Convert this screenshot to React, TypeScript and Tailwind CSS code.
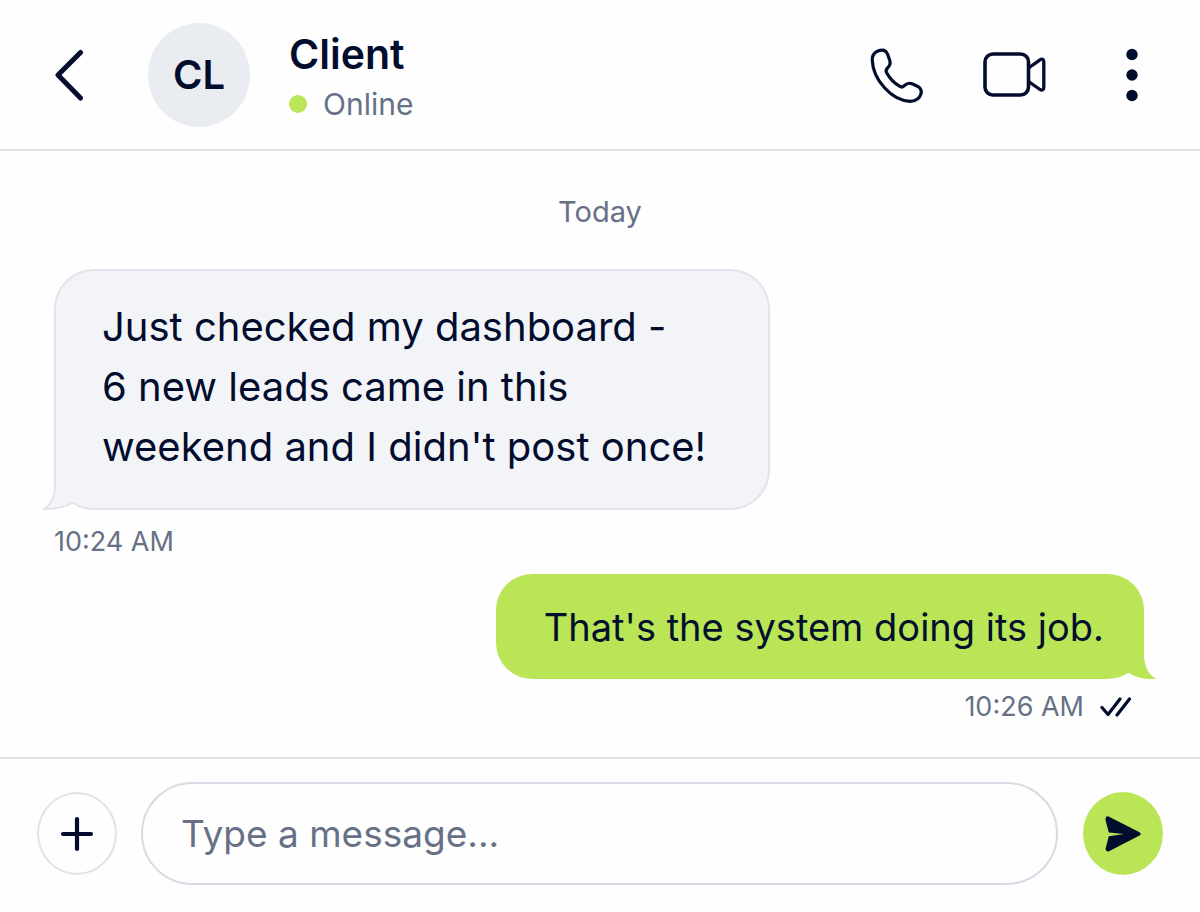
import { useState } from "react";

interface Message {
  id: number;
  lines: string[];
  time: string;
  own: boolean;
}

const messages: Message[] = [
  {
    id: 1,
    lines: [
      "Just checked my dashboard -",
      "6 new leads came in this",
      "weekend and I didn't post once!",
    ],
    time: "10:24 AM",
    own: false,
  },
  {
    id: 2,
    lines: ["That's the system doing its job."],
    time: "10:26 AM",
    own: true,
  },
];

function ChevronIcon() {
  return (
    <svg width="30" height="52" viewBox="0 0 30 52" fill="none" aria-hidden="true">
      <path
        d="M26.500 3.500 4 26 26.500 49"
        stroke="currentColor"
        strokeWidth="5"
        strokeLinecap="round"
        strokeLinejoin="round"
      />
    </svg>
  );
}

function PhoneIcon() {
  return (
    <svg width="54" height="56" viewBox="0 0 54 56" fill="none" aria-hidden="true">
      <path
        d="M8.500 3.800C4 5.500 2 8.500 2.300 13.500C3 32 21 53.500 40 54.300C46 54.300 51 50.500 51.300 45C51.300 42.500 50.500 41 48 39.500L42 36.800C39 35.500 37 36.200 34.500 38.500C33 40.300 31.500 40.500 29.500 39.200C24 36 19.500 31 16.500 25.500C15.700 23.800 16 22.500 17.500 21C20.300 18.500 20.600 16.500 19.800 13.500L17.500 7C16 3.200 12.500 2.200 8.500 3.800Z"
        stroke="currentColor"
        strokeWidth="3.200"
        strokeLinejoin="round"
      />
    </svg>
  );
}

function VideoIcon() {
  return (
    <svg width="64" height="46" viewBox="0 0 64 46" fill="none" aria-hidden="true">
      <rect x="3" y="2" width="43.500" height="41" rx="8" stroke="currentColor" strokeWidth="3.600" />
      <path
        d="M46.500 16 58 7.800C60 6.500 61.800 7.300 61.800 9.500V35.500C61.800 38 60 38.700 58 37.500L46.500 29.500"
        stroke="currentColor"
        strokeWidth="3.300"
        strokeLinejoin="round"
      />
    </svg>
  );
}

function DotsIcon() {
  return (
    <svg width="12" height="54" viewBox="0 0 12 54" fill="currentColor" aria-hidden="true">
      <circle cx="6" cy="6.500" r="5.700" />
      <circle cx="6" cy="27" r="5.700" />
      <circle cx="6" cy="47.500" r="5.700" />
    </svg>
  );
}

function ReadIcon() {
  return (
    <svg width="32" height="22" viewBox="0 0 32 22" fill="none" aria-label="Read">
      <path
        d="M2 11.500 8 18.500 20 3M17 19 29.500 3"
        stroke="currentColor"
        strokeWidth="3.200"
        strokeLinecap="round"
        strokeLinejoin="round"
      />
    </svg>
  );
}

function PlusIcon() {
  return (
    <svg width="34" height="36" viewBox="0 0 34 36" fill="none" aria-hidden="true">
      <path d="M17 3V33M3 18H31" stroke="currentColor" strokeWidth="4.200" strokeLinecap="round" />
    </svg>
  );
}

function SendIcon() {
  return (
    <svg width="36" height="38" viewBox="0 0 36 38" fill="currentColor" aria-hidden="true">
      <path d="M3.500 1.500 34.500 17.200Q37 19 34.500 20.600L3.500 36.500Q.3 37 .6 33.500L3.800 21.300 19 19.100 3.800 17.500.5 5Q.5.500 3.500 1.500Z" />
    </svg>
  );
}

function IncomingTail() {
  return (
    <svg
      className="absolute -bottom-[2px] -left-[14px]"
      width="60"
      height="52"
      viewBox="0 0 60 52"
      aria-hidden="true"
    >
      <path d="M14 8V28C13 40 8 48 2 51C14 51 24 49 31 44L40 40V8Z" fill="#f3f4f8" />
      <path
        d="M13 8V28C13 40 8 48 2 51C14 51 24 49 31 44.500"
        fill="none"
        stroke="#e2e4eb"
        strokeWidth="2"
        strokeLinejoin="round"
      />
    </svg>
  );
}

function OutgoingTail() {
  return (
    <svg
      className="absolute bottom-0 -right-[13px]"
      width="44"
      height="44"
      viewBox="0 0 44 44"
      aria-hidden="true"
    >
      <path d="M31 6V22C32 34 37 41 44 44C33 44.500 23 43 16 38L8 30V6Z" fill="#b9e556" />
    </svg>
  );
}

function ChatMessage({ message }: { message: Message }) {
  const text = message.lines.map((line) => (
    <span key={line} className="block">
      {line}
    </span>
  ));

  if (message.own) {
    return (
      <li className="flex flex-col items-end pr-14">
        <div className="relative rounded-[36px] bg-[#b9e556] pt-[23px] pr-10 pb-[22px] pl-12 text-[38px] leading-[60px] text-[#03102b]">
          {text}
          <OutgoingTail />
        </div>
        <div className="flex h-14 items-center gap-4 pr-3 text-[27px] text-[#677186]">
          <time>{message.time}</time>
          <span className="text-[#020c2d]">
            <ReadIcon />
          </span>
        </div>
      </li>
    );
  }

  return (
    <li className="flex flex-col items-start pl-[54px]">
      <div className="relative rounded-[40px] border-2 border-[#e2e4eb] bg-[#f3f4f8] pt-[26px] pr-[62px] pb-[31px] pl-[46px] text-[40px] leading-[60px] text-[#020c2d]">
        {text}
        <IncomingTail />
      </div>
      <time className="flex h-16 items-center text-[27px] text-[#677186]">{message.time}</time>
    </li>
  );
}

export default function App() {
  const [draft, setDraft] = useState("");

  return (
    <div className="flex min-h-screen flex-col bg-[#fefefe] font-['Inter',sans-serif] text-[#020c2d]">
      <header className="flex items-center border-b-2 border-[#e4e5ea] pt-[23px] pr-14 pb-[22px] pl-[54px]">
        <button type="button" aria-label="Back">
          <ChevronIcon />
        </button>
        <div className="ml-16 flex h-[104px] w-[102px] items-center justify-center rounded-[50%] bg-[#e9ecf0] text-[40px] font-semibold">
          CL
        </div>
        <div className="ml-[39px] flex-1 pt-1">
          <h1 className="text-[41px] leading-[54px] font-semibold">Client</h1>
          <p className="flex items-center gap-4 text-[30px] leading-[46px] text-[#677186]">
            <span className="size-[18px] rounded-full bg-[#b9e556]" />
            Online
          </p>
        </div>
        <div className="flex items-center">
          <button type="button" aria-label="Call">
            <PhoneIcon />
          </button>
          <button type="button" aria-label="Video call" className="ml-[58px]">
            <VideoIcon />
          </button>
          <button type="button" aria-label="More" className="mr-1.5 ml-20">
            <DotsIcon />
          </button>
        </div>
      </header>

      <main className="flex-1 pt-9">
        <p className="text-center text-[29px] leading-[50px] text-[#677186]">Today</p>
        <ul className="pt-8">
          {messages.map((message) => (
            <ChatMessage key={message.id} message={message} />
          ))}
        </ul>
      </main>

      <form
        className="flex items-center border-t-2 border-[#e4e5ea] pt-[23px] pr-[37px] pb-[27px] pl-[37px]"
        onSubmit={(e) => {
          e.preventDefault();
          setDraft("");
        }}
      >
        <button
          type="button"
          aria-label="Add attachment"
          className="flex h-[83px] w-20 shrink-0 items-center justify-center rounded-[50%] border-2 border-[#e1e3e8]"
        >
          <PlusIcon />
        </button>
        <input
          type="text"
          aria-label="Message"
          placeholder="Type a message..."
          value={draft}
          onChange={(e) => setDraft(e.target.value)}
          className="mr-[25px] ml-6 h-[103px] min-w-0 flex-1 rounded-full border-2 border-[#d8dbe4] px-[38px] text-[37px] outline-none placeholder:text-[#677186]"
        />
        <button
          type="submit"
          aria-label="Send"
          className="flex h-[83px] w-20 shrink-0 items-center justify-center rounded-[50%] bg-[#b9e556]"
        >
          <SendIcon />
        </button>
      </form>
    </div>
  );
}
